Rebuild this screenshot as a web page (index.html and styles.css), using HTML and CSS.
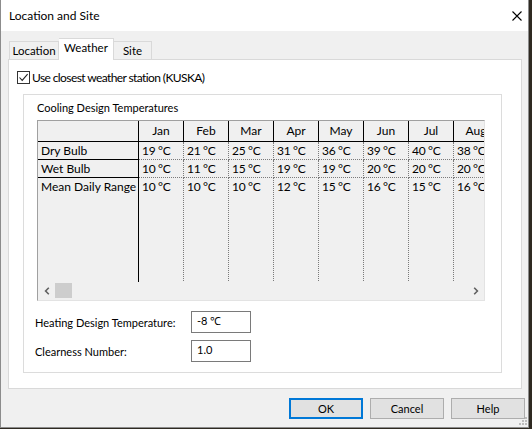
FILE: index.html
```html
<!DOCTYPE html>
<html lang="en">
<head>
    <meta charset="UTF-8">
    <title>Location and Site</title>
    <link rel="stylesheet" href="styles.css">
</head>
<body>
    <div class="window">
        <div class="titlebar">
            <span class="title">Location and Site</span>
            <svg class="close" width="10" height="10" viewBox="0 0 10 10">
                <path d="M0.5 0.5 L9.5 9.5 M9.5 0.5 L0.5 9.5" stroke="#000" stroke-width="1.1" fill="none"/>
            </svg>
        </div>
        <div class="client">
            <div class="tabs">
                <div class="tab tab-location">Location</div>
                <div class="tab tab-weather active">Weather</div>
                <div class="tab tab-site">Site</div>
            </div>
            <div class="page">
                <div class="check">
                    <span class="box">
                        <svg width="11" height="11" viewBox="0 0 11 11">
                            <path d="M1.5 5.5 L4.2 8.4 L9.6 2.2" stroke="#222" stroke-width="1.1" fill="none"/>
                        </svg>
                    </span>
                    <span>Use closest weather station (KUSKA)</span>
                </div>
                <div class="group">
                    <div class="legend">Cooling Design Temperatures</div>
                    <div class="grid">
                        <div class="grid-view">
                            <table>
                                <tr class="head">
                                    <th class="corner"></th>
                                    <th>Jan</th><th>Feb</th><th>Mar</th><th>Apr</th>
                                    <th>May</th><th>Jun</th><th>Jul</th><th>Aug</th>
                                </tr>
                                <tr>
                                    <th class="rowhead">Dry Bulb</th>
                                    <td>19 °C</td><td>21 °C</td><td>25 °C</td><td>31 °C</td>
                                    <td>36 °C</td><td>39 °C</td><td>40 °C</td><td>38 °C</td>
                                </tr>
                                <tr>
                                    <th class="rowhead">Wet Bulb</th>
                                    <td>10 °C</td><td>11 °C</td><td>15 °C</td><td>19 °C</td>
                                    <td>19 °C</td><td>20 °C</td><td>20 °C</td><td>20 °C</td>
                                </tr>
                                <tr class="last">
                                    <th class="rowhead">Mean Daily Range</th>
                                    <td>10 °C</td><td>10 °C</td><td>10 °C</td><td>12 °C</td>
                                    <td>15 °C</td><td>16 °C</td><td>15 °C</td><td>16 °C</td>
                                </tr>
                            </table>
                        </div>
                        <div class="hscroll">
                            <div class="arrow">
                                <svg width="6" height="8" viewBox="0 0 6 8"><path d="M4.8 0.8 L1.6 4 L4.8 7.2" stroke="#606060" stroke-width="1.6" fill="none"/></svg>
                            </div>
                            <div class="track"><div class="thumb"></div></div>
                            <div class="arrow">
                                <svg width="6" height="8" viewBox="0 0 6 8"><path d="M1.2 0.8 L4.4 4 L1.2 7.2" stroke="#606060" stroke-width="1.6" fill="none"/></svg>
                            </div>
                        </div>
                    </div>
                    <div class="field">
                        <span class="field-label">Heating Design Temperature:</span>
                        <div class="edit">-8 ℃</div>
                    </div>
                    <div class="field">
                        <span class="field-label">Clearness Number:</span>
                        <div class="edit">1.0</div>
                    </div>
                </div>
            </div>
            <div class="buttons">
                <button class="btn default">OK</button>
                <button class="btn">Cancel</button>
                <button class="btn">Help</button>
            </div>
            <svg class="grip" width="8" height="8" viewBox="0 0 8 8">
                <rect x="6" y="0" width="2" height="2" fill="#bcbcbc"/>
                <rect x="3" y="3" width="2" height="2" fill="#bcbcbc"/>
                <rect x="6" y="3" width="2" height="2" fill="#bcbcbc"/>
                <rect x="0" y="6" width="2" height="2" fill="#bcbcbc"/>
                <rect x="3" y="6" width="2" height="2" fill="#bcbcbc"/>
                <rect x="6" y="6" width="2" height="2" fill="#bcbcbc"/>
            </svg>
        </div>
    </div>
</body>
</html>
```

FILE: styles.css
```css
* {
    box-sizing: border-box;
}
body {
    margin: 0;
    background-color: #2f2a22;
    font-family: Lato, "Liberation Sans", sans-serif;
    font-size: 11px;
    color: #000;
}
.window {
    width: 529px;
    height: 428px;
    background-color: #f0f0f0;
    border: 1px solid #8c8c8c;
    border-top: none;
    display: flex;
    flex-direction: column;
}
.titlebar {
    height: 31px;
    background-color: #fff;
    display: flex;
    align-items: center;
    justify-content: space-between;
    padding: 0 6px 0 8px;
}
.title {
    font-size: 12px;
}
.close {
    display: block;
}
.client {
    flex: 1;
    position: relative;
    padding: 7px 6px 0 7px;
}
.tabs {
    display: flex;
    align-items: flex-end;
    height: 21px;
    padding-left: 1px;
}
.tab {
    height: 18px;
    border: 1px solid #d9d9d9;
    border-bottom: none;
    background-color: #f0f0f0;
    display: flex;
    align-items: center;
    justify-content: center;
    line-height: 14px;
    font-size: 11.5px;
}
.tab-location {
    width: 50px;
}
.tab-weather {
    width: 55px;
}
.tab-site {
    width: 38px;
    border-left: none;
}
.tab.active {
    height: 22px;
    margin-bottom: -1px;
    background-color: #fff;
    position: relative;
    z-index: 1;
    border-left: none;
    align-items: flex-start;
    padding-top: 2px;
}
.page {
    height: 330px;
    background-color: #fff;
    border: 1px solid #d9d9d9;
    padding: 11px 0 0 8px;
}
.check {
    display: flex;
    align-items: center;
    height: 13px;
    gap: 2px;
    font-size: 12px;
    letter-spacing: -0.6px;
}
.box {
    width: 13px;
    height: 13px;
    border: 1px solid #333;
    background-color: #fff;
    display: flex;
}
.group {
    margin: 10px 19px 0 6px;
    height: 279px;
    border: 1px solid #dcdcdc;
    padding: 5px 0 0 13px;
}
.legend {
    line-height: 16px;
}
.grid {
    margin-top: 4px;
    width: 448px;
    height: 181px;
    border-top: 1px solid #a0a0a0;
    border-left: 1px solid #a0a0a0;
    border-right: 1px solid #e3e3e3;
    border-bottom: 1px solid #e3e3e3;
    background-color: #f0f0f0;
    display: flex;
    flex-direction: column;
}
.grid-view {
    height: 162px;
    overflow: hidden;
}
table {
    border-collapse: separate;
    border-spacing: 0;
    table-layout: fixed;
    width: 461px;
    font-size: 12px;
}
th, td {
    font-weight: normal;
    padding: 0;
    white-space: nowrap;
    overflow: hidden;
    height: 18px;
    line-height: 17px;
    vertical-align: top;
}
tr.head th {
    width: 45px;
    height: 21px;
    line-height: 20px;
    text-align: center;
    border-right: 1px solid #000;
    border-bottom: 1px solid #000;
}
tr.head th.corner {
    width: 101px;
}
.rowhead {
    text-align: left;
    padding-left: 3px;
    border-right: 1px solid #000;
    border-bottom: 1px solid #000;
}
td {
    padding-left: 3px;
    border-right: 1px dotted #7a7a7a;
    border-bottom: 1px dotted #7a7a7a;
    letter-spacing: -0.3px;
}
tr.last th, tr.last td {
    height: 105px;
}
.hscroll {
    height: 18px;
    display: flex;
}
.arrow {
    width: 17px;
    display: flex;
    align-items: center;
    justify-content: center;
}
.track {
    flex: 1;
    padding-top: 1px;
}
.thumb {
    width: 17px;
    height: 15px;
    background-color: #cdcdcd;
}
.field {
    display: flex;
    align-items: center;
    margin-top: 10px;
    height: 22px;
}
.field + .field {
    margin-top: 7px;
}
.field-label {
    width: 156px;
    margin-left: -2px;
}
.edit {
    width: 60px;
    height: 22px;
    border: 1px solid #7a7a7a;
    background-color: #fff;
    padding: 2px 0 0 5px;
    line-height: 14px;
}
.buttons {
    display: flex;
    justify-content: flex-end;
    gap: 7px;
    margin-top: 9px;
    margin-right: -3px;
}
.btn {
    width: 74px;
    height: 21px;
    font-family: Lato, "Liberation Sans", sans-serif;
    font-size: 11px;
    background-color: #e1e1e1;
    border: 1px solid #adadad;
    padding: 0;
}
.btn.default {
    border: 2px solid #0078d7;
}
.grip {
    position: absolute;
    right: 1px;
    bottom: 2px;
}
```
